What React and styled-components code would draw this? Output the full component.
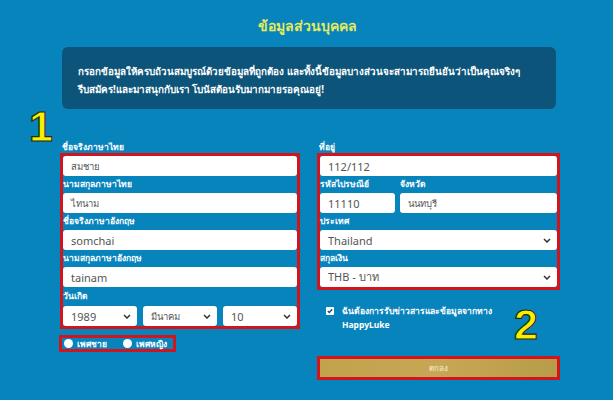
import React from "react";
import styled, { createGlobalStyle } from "styled-components";

const Global = createGlobalStyle`
  html, body { margin: 0; padding: 0; }
  body {
    background: #0884bd;
    font-family: "Noto Sans", "DejaVu Sans", sans-serif;
    width: 613px;
    height: 400px;
    overflow: hidden;
  }
`;

const Page = styled.div`
  position: relative;
  width: 613px;
  height: 400px;
  background: #0884bd;
  padding-top: 16px;
  box-sizing: border-box;
`;

const Title = styled.h1`
  margin: 0;
  text-align: center;
  font-size: 14px;
  font-weight: 700;
  color: #e4ea5c;
  line-height: 20px;
  padding-left: 2px;
`;

const InfoBox = styled.div`
  margin: 11px 0 0 62px;
  width: 494px;
  height: 62px;
  box-sizing: border-box;
  background: #0c5479;
  border-radius: 6px;
  padding: 16px 16px 0;
  color: #fff;
  font-size: 9.8px;
  font-weight: 700;
  line-height: 18px;
  white-space: nowrap;
`;

const Form = styled.div`
  display: grid;
  grid-template-columns: 240px 243px;
  column-gap: 17px;
  margin: 32px 0 0 60px;
  width: 500px;
`;

const Column = styled.div`
  display: flex;
  flex-direction: column;
`;

const RedFrame = styled.div`
  border: 3px solid #d3141d;
  display: flex;
  flex-direction: column;
`;

const Label = styled.div`
  height: ${(p) => p.$h || 17}px;
  width: ${(p) => (p.$w ? p.$w + "px" : "auto")};
  display: flex;
  align-items: center;
  padding-left: ${(p) => p.$pl || 0}px;
  color: #fff;
  font-size: 8.5px;
  font-weight: 700;
  line-height: 1;
`;

const Input = styled.div`
  height: 20px;
  background: #fff;
  border-radius: 3px;
  display: flex;
  align-items: center;
  padding-left: ${(p) => p.$pl || 8}px;
  font-size: ${(p) => p.$fs || 9.5}px;
  color: #555;
  box-sizing: border-box;
  flex: ${(p) => p.$flex || "none"};
  width: ${(p) => (p.$w ? p.$w + "px" : "auto")};
`;

const Select = styled(Input)`
  justify-content: space-between;
  padding-right: 6px;
`;

const Chevron = () => (
  <svg width="8" height="5" viewBox="0 0 8 5">
    <path d="M1 1l3 3L7 1" fill="none" stroke="#333" strokeWidth="1.5" />
  </svg>
);

const Row = styled.div`
  display: flex;
  gap: ${(p) => p.$gap || 0}px;
`;

const RadioFrame = styled.div`
  margin: 6px 0 0 -1px;
  width: 117px;
  height: 17px;
  box-sizing: border-box;
  border: 3px solid #d3141d;
  display: flex;
  align-items: center;
  padding-left: 2px;
`;

const RadioItem = styled.div`
  display: flex;
  align-items: center;
  gap: 4px;
  color: #fff;
  font-size: 8.5px;
  font-weight: 700;
  margin-right: ${(p) => p.$mr || 0}px;
`;

const RadioDot = styled.span`
  width: 9px;
  height: 9px;
  border-radius: 50%;
  background: #fff;
  display: inline-block;
`;

const CheckRow = styled.div`
  display: flex;
  gap: 8px;
  margin: 14px 0 0 9px;
  color: #fff;
  font-size: 8.5px;
  font-weight: 700;
  line-height: 14px;
`;

const CheckBox = styled.span`
  width: 8px;
  height: 8px;
  margin-top: 3px;
  flex: none;
  background: #fff;
  border-radius: 1px;
  display: flex;
  align-items: center;
  justify-content: center;
`;

const ButtonFrame = styled.div`
  margin-top: 24px;
  border: 3px solid #d3141d;
  height: 24px;
  box-sizing: border-box;
`;

const Button = styled.div`
  height: 100%;
  background: linear-gradient(90deg, #c3a24c, #c6a755 50%, #b89c4a);
  color: #eadcae;
  font-size: 8px;
  font-weight: 700;
  display: flex;
  align-items: center;
  justify-content: center;
`;

const Marker = styled.div`
  position: absolute;
  left: ${(p) => p.$x}px;
  top: ${(p) => p.$y}px;
  font-family: "Liberation Sans", Arial, sans-serif;
  font-size: 43px;
  font-weight: 700;
  line-height: 1;
  color: #f7f000;
  -webkit-text-stroke: 1.2px #2a2a10;
`;

export default function App() {
  return (
    <Page>
      <Global />
      <Title>ข้อมูลส่วนบุคคล</Title>
      <InfoBox>
        กรอกข้อมูลให้ครบถ้วนสมบูรณ์ด้วยข้อมูลที่ถูกต้อง และทั้งนี้ข้อมูลบางส่วนจะสามารถยืนยันว่าเป็นคุณจริงๆ
        <br />
        รีบสมัคร!และมาสนุกกับเรา โบนัสต้อนรับมากมายรอคุณอยู่!
      </InfoBox>
      <Form>
        <Column>
          <Label $h={12} $pl={2}>ชื่อจริงภาษาไทย</Label>
          <RedFrame>
            <Input>สมชาย</Input>
            <Label>นามสกุลภาษาไทย</Label>
            <Input>ไทนาม</Input>
            <Label>ชื่อจริงภาษาอังกฤษ</Label>
            <Input $fs={11}>somchai</Input>
            <Label>นามสกุลภาษาอังกฤษ</Label>
            <Input $fs={11}>tainam</Input>
            <Label $h={19}>วันเกิด</Label>
            <Row $gap={6}>
              <Select $fs={11} $flex="1">1989<Chevron /></Select>
              <Select $flex="1">มีนาคม<Chevron /></Select>
              <Select $fs={11} $flex="1">10<Chevron /></Select>
            </Row>
          </RedFrame>
          <RadioFrame>
            <RadioItem $mr={16}><RadioDot />เพศชาย</RadioItem>
            <RadioItem><RadioDot />เพศหญิง</RadioItem>
          </RadioFrame>
        </Column>
        <Column>
          <Label $h={12} $pl={2}>ที่อยู่</Label>
          <RedFrame>
            <Input $fs={11}>112/112</Input>
            <Row>
              <Label $w={80}>รหัสไปรษณีย์</Label>
              <Label>จังหวัด</Label>
            </Row>
            <Row $gap={5}>
              <Input $fs={11} $w={75}>11110</Input>
              <Input $flex="1">นนทบุรี</Input>
            </Row>
            <Label>ประเทศ</Label>
            <Select $fs={11}>Thailand<Chevron /></Select>
            <Label>สกุลเงิน</Label>
            <Select $fs={11}>THB - บาท<Chevron /></Select>
          </RedFrame>
          <CheckRow>
            <CheckBox>
              <svg width="6" height="6" viewBox="0 0 6 6">
                <path d="M0.8 3l1.5 1.5L5.2 1.2" fill="none" stroke="#0c5479" strokeWidth="1.4" />
              </svg>
            </CheckBox>
            <div>
              ฉันต้องการรับข่าวสารและข้อมูลจากทาง
              <br />
              HappyLuke
            </div>
          </CheckRow>
          <ButtonFrame>
            <Button>ตกลง</Button>
          </ButtonFrame>
        </Column>
      </Form>
      <Marker $x={29} $y={105}>1</Marker>
      <Marker $x={514} $y={303}>2</Marker>
    </Page>
  );
}
